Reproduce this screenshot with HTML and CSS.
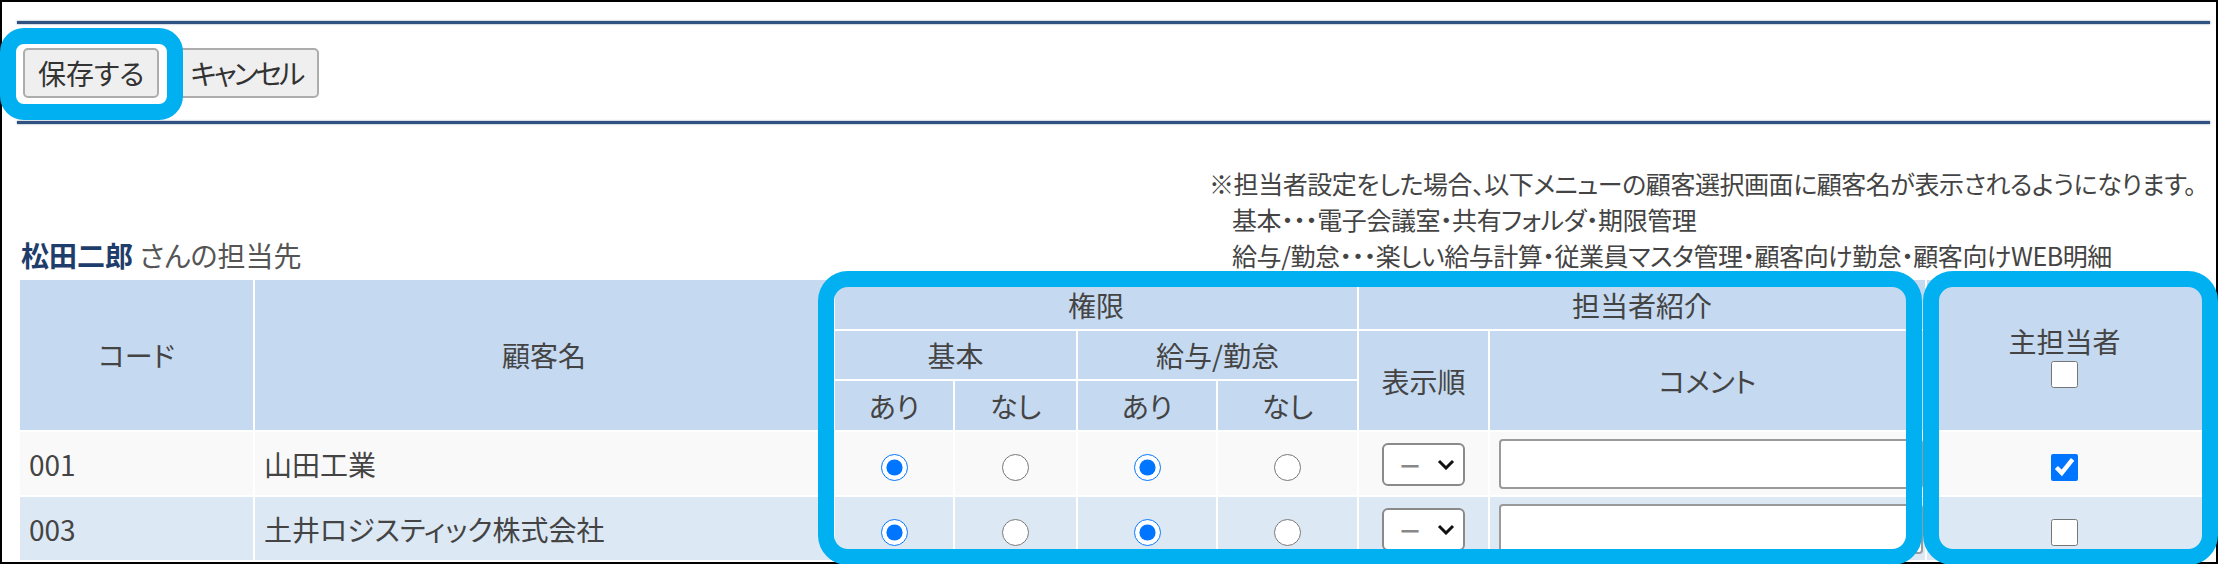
FILE: index.html
```html
<!DOCTYPE html>
<html lang="ja">
<head>
  <meta charset="UTF-8">
  <meta name="viewport" content="width=device-width, initial-scale=1.0">
  <title>担当先設定</title>
  <link rel="stylesheet" href="styles.css">
</head>
<body>
  <div class="frame">
    <hr class="rule">
    <div class="toolbar">
      <button class="button">保存する</button>
      <button class="button button-cancel">キャンセル</button>
    </div>
    <hr class="rule">

    <!-- Heading + note -->
    <div class="info">
      <h2 class="owner"><span class="owner-name">松田二郎</span> さんの担当先</h2>
      <div class="note">
        <p>※担当者設定をした場合、以下メニューの顧客選択画面に顧客名が表示されるようになります。</p>
        <p class="note-sub">基本・・・電子会議室・共有フォルダ・期限管理</p>
        <p class="note-sub">給与/勤怠・・・楽しい給与計算・従業員マスタ管理・顧客向け勤怠・顧客向けWEB明細</p>
      </div>
    </div>

    <!-- Client table -->
    <table class="client-table">
      <colgroup>
        <col style="width: 235px">
        <col style="width: 580px">
        <col style="width: 120px">
        <col style="width: 123px">
        <col style="width: 140px">
        <col style="width: 141px">
        <col style="width: 131px">
        <col style="width: 437px">
        <col style="width: 277px">
      </colgroup>
      <thead>
        <tr class="head-1">
          <th rowspan="3">コード</th>
          <th rowspan="3">顧客名</th>
          <th colspan="4">権限</th>
          <th colspan="2">担当者紹介</th>
          <th rowspan="3" class="main-head">主担当者<input type="checkbox" class="check"></th>
        </tr>
        <tr class="head-2">
          <th colspan="2">基本</th>
          <th colspan="2">給与/勤怠</th>
          <th rowspan="2">表示順</th>
          <th rowspan="2">コメント</th>
        </tr>
        <tr class="head-3">
          <th>あり</th>
          <th>なし</th>
          <th>あり</th>
          <th>なし</th>
        </tr>
      </thead>
      <tbody>
        <tr>
          <td>001</td>
          <td>山田工業</td>
          <td class="center"><input type="radio" class="radio" name="basic-001" checked></td>
          <td class="center"><input type="radio" class="radio" name="basic-001"></td>
          <td class="center"><input type="radio" class="radio" name="pay-001" checked></td>
          <td class="center"><input type="radio" class="radio" name="pay-001"></td>
          <td class="center">
            <span class="order">
              <select><option>－</option></select>
              <svg class="order-arrow" width="18" height="11" viewBox="0 0 18 11"><path d="M2 2 L9 9 L16 2" fill="none" stroke="#111" stroke-width="3"/></svg>
            </span>
          </td>
          <td><input type="text" class="comment"></td>
          <td class="center"><input type="checkbox" class="check" checked></td>
        </tr>
        <tr>
          <td>003</td>
          <td>土井ロジスティック株式会社</td>
          <td class="center"><input type="radio" class="radio" name="basic-003" checked></td>
          <td class="center"><input type="radio" class="radio" name="basic-003"></td>
          <td class="center"><input type="radio" class="radio" name="pay-003" checked></td>
          <td class="center"><input type="radio" class="radio" name="pay-003"></td>
          <td class="center">
            <span class="order">
              <select><option>－</option></select>
              <svg class="order-arrow" width="18" height="11" viewBox="0 0 18 11"><path d="M2 2 L9 9 L16 2" fill="none" stroke="#111" stroke-width="3"/></svg>
            </span>
          </td>
          <td><input type="text" class="comment"></td>
          <td class="center"><input type="checkbox" class="check"></td>
        </tr>
      </tbody>
    </table>

    <!-- Highlight frames -->
    <div class="mark mark-save"></div>
    <div class="mark mark-perm"></div>
    <div class="mark mark-main"></div>
  </div>
</body>
</html>
```

FILE: styles.css
```css
body {
  margin: 0;
  font-family: "Noto Sans CJK JP", sans-serif;
  font-feature-settings: "palt" 1;
  color: #444;
  background-color: #fff;
}

.frame {
  position: relative;
  width: 2218px;
  height: 564px;
  box-sizing: border-box;
  border: 2px solid #000;
  padding: 19px 6px 0 15px;
}

.rule {
  margin: 0;
  height: 3px;
  border: none;
  background-color: #2f5280;
  box-shadow: 0 0 2px rgba(47, 82, 128, 0.7);
}

.toolbar {
  display: flex;
  gap: 17px;
  padding: 24px 0 23px 6px;
}

.button {
  height: 50px;
  padding: 0 13px;
  font-family: inherit;
  font-feature-settings: "palt" 1;
  font-size: 28px;
  line-height: 1;
  color: #333;
  background-color: #efefef;
  border: 2px solid #adadad;
  border-radius: 5px;
}

.button-cancel {
  letter-spacing: -3px;
  padding: 0 15px 0 12px;
}

.info {
  display: flex;
  justify-content: space-between;
  align-items: flex-end;
  margin-top: 41px;
}

.owner {
  margin: 0 0 0 4px;
  font-size: 28px;
  font-weight: normal;
  line-height: 36px;
  color: #555;
}

.owner-name {
  font-weight: bold;
  color: #1f3d6b;
}

.note {
  margin-right: 14px;
  font-size: 25px;
  letter-spacing: -0.45px;
  line-height: 36px;
  color: #444;
}

.note p {
  margin: 0;
}

.note-sub {
  padding-left: 23px;
}

.client-table {
  margin: 5px 0 0 1px;
  width: 2184px;
  table-layout: fixed;
  border-collapse: collapse;
  font-size: 28px;
}

.client-table th,
.client-table td {
  border: 2px solid #fff;
  padding: 0;
}

.client-table th {
  background-color: #c5d9f0;
  font-weight: normal;
  color: #444;
  text-align: center;
  line-height: 36px;
}

.head-1 th { height: 49px; }
.head-2 th { height: 48px; }
.head-3 th { height: 49px; }

.client-table td {
  height: 63px;
  padding-left: 9px;
  color: #444;
}

.client-table tbody tr:nth-child(odd) td {
  background-color: #f9f9f9;
}

.client-table tbody tr:nth-child(even) td {
  background-color: #dde8f5;
}

.client-table td.center {
  padding-left: 0;
  text-align: center;
}

.radio,
.check {
  width: 27px;
  height: 27px;
  margin: 0;
  vertical-align: middle;
}

.main-head .check {
  display: block;
  margin: 2px auto 0;
}

.order {
  position: relative;
  display: inline-block;
  vertical-align: middle;
}

.order select {
  appearance: none;
  display: block;
  width: 83px;
  height: 43px;
  padding: 0 0 0 14px;
  font-family: inherit;
  font-size: 24px;
  font-weight: bold;
  color: #888;
  background-color: #fff;
  border: 2px solid #8a8a8a;
  border-radius: 6px;
}

.order-arrow {
  position: absolute;
  right: 10px;
  top: 16px;
  pointer-events: none;
}

.comment {
  display: block;
  width: 424px;
  height: 50px;
  box-sizing: border-box;
  border: 2px solid #9a9a9a;
  border-radius: 4px;
  background-color: #fff;
}

.mark {
  position: absolute;
  box-sizing: border-box;
  border: 16px solid #00b0f0;
  border-radius: 30px;
}

.mark-save {
  left: -2px;
  top: 26px;
  width: 183px;
  height: 92px;
  border-radius: 24px;
}

.mark-perm {
  left: 816px;
  top: 269px;
  width: 1104px;
  height: 294px;
}

.mark-main {
  left: 1921px;
  top: 269px;
  width: 295px;
  height: 294px;
}
```
